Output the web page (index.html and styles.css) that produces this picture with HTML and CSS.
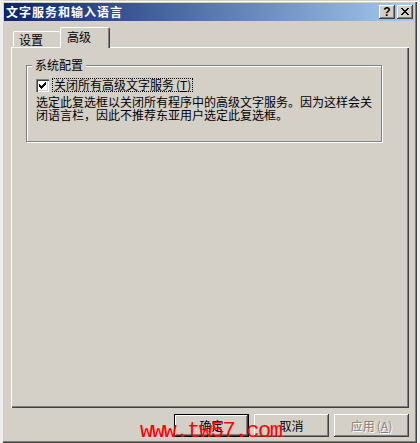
FILE: index.html
```html
<!DOCTYPE html>
<html lang="zh-CN">
<head>
<meta charset="utf-8">
<title>文字服务和输入语言</title>
<link rel="stylesheet" href="styles.css">
</head>
<body>
<div class="screen">
  <div class="dialog">
    <div class="titlebar">
      <span class="title">文字服务和输入语言</span>
      <div class="caption-btns">
        <span class="cbtn help">?</span>
        <span class="cbtn close"><svg width="8" height="7" viewBox="0 0 8 7" shape-rendering="crispEdges"><path d="M0 0h2v1H0zM6 0h2v1H6zM1 1h2v1H1zM5 1h2v1H5zM2 2h4v1H2zM3 3h2v1H3zM2 4h4v1H2zM1 5h2v1H1zM5 5h2v1H5zM0 6h2v1H0zM6 6h2v1H6z" fill="#000"/></svg></span>
      </div>
    </div>
    <div class="content">
      <div class="tabs">
        <div class="tab">设置</div>
        <div class="tab active">高级</div>
      </div>
      <div class="panel">
        <fieldset class="group">
          <legend>系统配置</legend>
          <label class="check-row">
            <span class="checkbox"><svg width="13" height="13" viewBox="0 0 13 13" shape-rendering="crispEdges"><path d="M3 5h1v3H3zM4 6h1v3H4zM5 7h1v3H5zM6 6h1v3H6zM7 5h1v3H7zM8 4h1v3H8zM9 3h1v3H9z" fill="#000"/></svg></span>
            <span class="check-label">关闭所有高级文字服务<span class="accel">(<u>T</u>)</span></span>
          </label>
          <p class="desc">选定此复选框以关闭所有程序中的高级文字服务。因为这样会关闭语言栏，因此不推荐东亚用户选定此复选框。</p>
        </fieldset>
      </div>
      <div class="buttons">
        <button class="btn default">确定</button>
        <button class="btn">取消</button>
        <button class="btn disabled">应用<span class="accel">(<u>A</u>)</span></button>
      </div>
    </div>
  </div>
  <div class="watermark">www.tw57.com</div>
</div>
</body>
</html>
```

FILE: styles.css
```css
html, body {
  margin: 0;
  padding: 0;
}
body {
  width: 420px;
  height: 443px;
  overflow: hidden;
  background: #eeeeee;
  font-family: "Noto Sans CJK SC", "Liberation Sans", sans-serif;
  font-size: 12px;
  color: #000;
}
.screen {
  position: relative;
  width: 420px;
  height: 443px;
  overflow: hidden;
  background: #eeeeee;
}
.dialog {
  margin-left: 3px;
  width: 414px;
  height: 443px;
  box-sizing: border-box;
  padding: 3px 3px 0 1px;
  background: #d4d0c8;
  box-shadow: inset 0 1px #d4d0c8, inset 0 2px #ffffff, inset -1px -1px #404040, inset -2px -2px #808080;
}
.titlebar {
  height: 18px;
  display: flex;
  align-items: center;
  justify-content: space-between;
  padding: 0 1px 0 2px;
  background: linear-gradient(to right, #0a246a, #a6caf0);
}
.title {
  color: #fff;
  font-weight: bold;
  font-size: 12px;
  line-height: 14px;
  letter-spacing: 1px;
}
.caption-btns {
  display: flex;
  gap: 2px;
}
.cbtn {
  width: 16px;
  height: 14px;
  box-sizing: border-box;
  display: flex;
  align-items: center;
  justify-content: center;
  background: #d4d0c8;
  box-shadow: inset -1px -1px #404040, inset 1px 1px #ffffff, inset -2px -2px #808080, inset 2px 2px #d4d0c8;
}
.help {
  font-family: "Liberation Sans", sans-serif;
  font-weight: bold;
  font-size: 12px;
  line-height: 12px;
  padding-bottom: 1px;
}
.close svg {
  display: block;
  margin-top: -1px;
}
.content {
  padding: 6px 5px 0 7px;
}
.tabs {
  position: relative;
  z-index: 1;
  display: flex;
  align-items: flex-end;
  height: 21px;
  margin-bottom: -1px;
  padding-left: 2px;
}
.tab {
  box-sizing: border-box;
  height: 16px;
  width: 47px;
  margin-bottom: 1px;
  padding: 1px 0 0 5px;
  line-height: 14px;
  background: #d4d0c8;
  border-top: 1px solid #fff;
  border-left: 1px solid #fff;
  border-radius: 2px 2px 0 0;
}
.tab.active {
  height: 21px;
  width: 50px;
  margin-bottom: 0;
  padding: 2px 0 0 6px;
  border-right: 1px solid #404040;
  box-shadow: inset -1px 0 #808080;
}
.panel {
  height: 361px;
  box-sizing: border-box;
  padding: 12px 0 0 15px;
  background: #d4d0c8;
  box-shadow: inset 1px 1px #ffffff, inset -1px -1px #404040, inset -2px -2px #808080;
}
.group {
  margin: 0;
  width: 356px;
  min-width: 0;
  box-sizing: border-box;
  padding: 7px 8px 20px 9px;
  border: 1px solid #808080;
  box-shadow: 1px 1px #ffffff, inset 1px 1px #ffffff;
}
.group legend {
  padding: 0 3px;
  margin-left: -4px;
  line-height: 12px;
  background: #d4d0c8;
}
.check-row {
  display: flex;
  align-items: center;
  gap: 3px;
  height: 14px;
  margin-bottom: 3px;
}
.checkbox {
  width: 13px;
  height: 13px;
  box-sizing: border-box;
  background: #fff;
  box-shadow: inset 1px 1px #808080, inset 2px 2px #404040, inset -1px -1px #ffffff, inset -2px -2px #d4d0c8;
}
.checkbox svg {
  display: block;
}
.check-label {
  border: 1px dotted #000;
  padding: 0 1px;
  line-height: 12px;
}
.accel {
  margin-left: 2px;
}
.desc {
  margin: 0;
  line-height: 13px;
}
.buttons {
  display: flex;
  justify-content: flex-end;
  gap: 5px;
  margin-top: 6px;
}
.btn {
  width: 75px;
  height: 23px;
  box-sizing: border-box;
  border: none;
  padding: 0;
  font-family: "Noto Sans CJK SC", "Liberation Sans", sans-serif;
  font-size: 12px;
  line-height: 14px;
  color: #000;
  background: #d4d0c8;
  box-shadow: inset -1px -1px #404040, inset 1px 1px #ffffff, inset -2px -2px #808080, inset 2px 2px #d4d0c8;
}
.btn.default {
  border: 1px solid #000;
}
.btn.disabled {
  color: #808080;
  text-shadow: 1px 1px #ffffff;
}
.watermark {
  position: absolute;
  left: 140px;
  top: 421px;
  font-family: "Liberation Mono", monospace;
  font-size: 22px;
  line-height: 22px;
  letter-spacing: -1.4px;
  color: #ff0000;
}
```
